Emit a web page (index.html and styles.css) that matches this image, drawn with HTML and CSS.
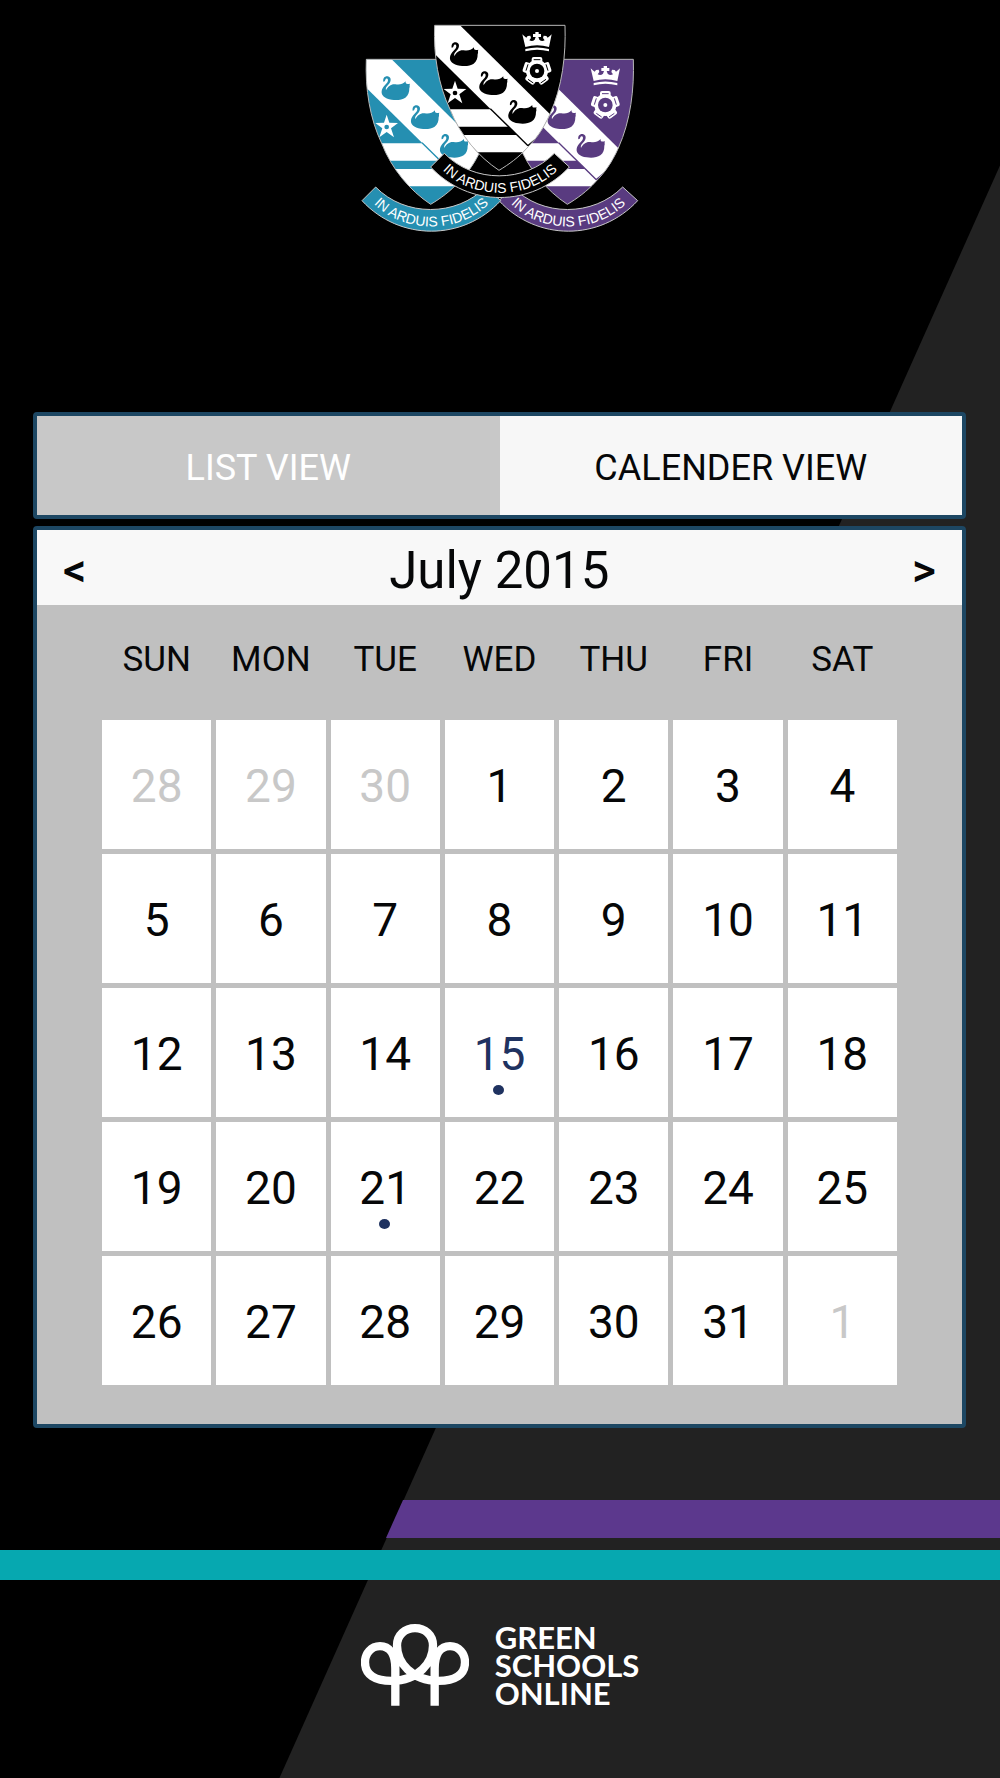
FILE: index.html
```html
<!DOCTYPE html>
<html lang="en">
<head>
<meta charset="utf-8">
<meta name="viewport" content="width=device-width, initial-scale=1">
<title>Calendar - July 2015</title>
<link rel="stylesheet" href="styles.css">
</head>
<body>
<div class="page">
  <header class="masthead">
    <svg class="crest" viewBox="0 0 900 690" role="img" aria-label="School crest">
      <defs>
        <clipPath id="shield-clip"><path d="M254 31H645C648 120 637 215 600 297C580 342 558 372 532 398C505 428 477 448 447 466C385 425 330 360 300 283C265 210 250 120 254 31Z"/></clipPath>
        <path id="swan" d="M305 98C303 88 309 81 318 82C330 84 329 98 321 106C314 113 311 118 313 124C318 112 330 104 341 106C352 108 363 107 372 97C371 104 374 106 385 104C382 109 386 112 383 117C383 130 380 138 371 146C361 153 345 154 330 152C308 149 298 138 300 126C302 112 319 104 319 94C319 88 313 87 311 92C310 95 309 98 305 98Z"/>
        <g id="shield">
          <g clip-path="url(#shield-clip)">
            <path fill="currentColor" d="M240 20H660V480H240Z"/>
            <path fill="#fff" d="M240 20H319L620 317L532 391L240 103Z"/>
            <path fill="#fff" d="M280 283H423L475 335H280ZM300 360H500L532 391L560 412H300Z"/>
            <path stroke="currentColor" stroke-width="4" d="M421 281L534 392"/>
          </g>
          <g fill="currentColor">
            <use href="#swan"/>
            <use href="#swan" x="88" y="87"/>
            <use href="#swan" x="175" y="173"/>
          </g>
          <path fill="#fff" d="M315 197L323 221L349 222L328 238L337 265L315 249L293 265L302 238L281 222L307 221Z"/>
          <circle cx="315" cy="234" r="7" fill="currentColor"/>
          <path fill="#fff" d="M526 96L517 58Q522 64 529 68L533 63L541 62L543 69L538 76Q547 81 554 74L557 66L549 66V57H556V51H566V57H573V66H565L568 74Q575 81 584 76L579 69L581 62L589 63L593 68Q600 64 605 58L597 96Q561 86 526 96ZM526 102Q561 93 597 102V109Q561 100 526 109Z"/>
          <g fill="#fff">
            <circle cx="561" cy="168" r="33"/>
            <rect x="545" y="126" width="32" height="24" rx="6"/>
            <rect x="545" y="126" width="32" height="24" rx="6" transform="rotate(72 561 168)"/>
            <rect x="545" y="126" width="32" height="24" rx="6" transform="rotate(144 561 168)"/>
            <rect x="545" y="126" width="32" height="24" rx="6" transform="rotate(216 561 168)"/>
            <rect x="545" y="126" width="32" height="24" rx="6" transform="rotate(288 561 168)"/>
          </g>
          <path fill="none" stroke="currentColor" stroke-width="3" d="M551 134H571M588 148L594 167M588 193L572 204M550 204L534 193M528 167L534 148"/>
          <circle cx="561" cy="168" r="22" fill="currentColor"/>
          <circle cx="561" cy="168" r="6" fill="#fff"/>
          <path fill="none" stroke="#b9b9b9" stroke-width="3" d="M254 31H645C648 120 637 215 600 297C580 342 558 372 532 398C505 428 477 448 447 466C385 425 330 360 300 283C265 210 250 120 254 31Z"/>
        </g>
        <path id="motto-line" d="M272 460C365 558 535 558 628 460"/>
        <g id="ribbon">
          <path fill="currentColor" stroke="#c8c8c8" stroke-width="3" d="M283 415C370 505 525 505 613 415L658 456C545 578 355 578 242 456Z"/>
          <text class="motto"><textPath href="#motto-line" startOffset="50%" text-anchor="middle">IN ARDUIS FIDELIS</textPath></text>
        </g>
      </defs>
      <g class="house-teal"><use href="#shield" x="-205" y="102"/></g>
      <g class="house-purple"><use href="#shield" x="205" y="102"/></g>
      <g class="house-purple"><use href="#ribbon" x="205" y="101"/></g>
      <g class="house-teal"><use href="#ribbon" x="-206" y="101"/></g>
      <g class="house-black"><use href="#shield"/><use href="#ribbon"/></g>
    </svg>
  </header>

  <main class="content">
    <nav class="tabs" aria-label="View">
      <button class="tab" type="button">LIST VIEW</button>
      <button class="tab tab-active" type="button" aria-pressed="true">CALENDER VIEW</button>
    </nav>

    <section class="calendar" aria-labelledby="month">
      <div class="month-bar">
        <button class="step" type="button" aria-label="Previous month">&lt;</button>
        <h1 class="month" id="month">July 2015</h1>
        <button class="step" type="button" aria-label="Next month">&gt;</button>
      </div>
      <div class="month-body">
        <table class="days">
          <thead>
            <tr><th scope="col">SUN</th><th scope="col">MON</th><th scope="col">TUE</th><th scope="col">WED</th><th scope="col">THU</th><th scope="col">FRI</th><th scope="col">SAT</th></tr>
          </thead>
          <tbody>
            <tr><td class="outside">28</td><td class="outside">29</td><td class="outside">30</td><td>1</td><td>2</td><td>3</td><td>4</td></tr>
            <tr><td>5</td><td>6</td><td>7</td><td>8</td><td>9</td><td>10</td><td>11</td></tr>
            <tr><td>12</td><td>13</td><td>14</td><td class="today event">15</td><td>16</td><td>17</td><td>18</td></tr>
            <tr><td>19</td><td>20</td><td class="event">21</td><td>22</td><td>23</td><td>24</td><td>25</td></tr>
            <tr><td>26</td><td>27</td><td>28</td><td>29</td><td>30</td><td>31</td><td class="outside">1</td></tr>
          </tbody>
        </table>
      </div>
    </section>
  </main>

  <footer class="footer">
    <div class="stripe-purple"></div>
    <div class="stripe-teal"></div>
    <div class="brand">
      <svg class="brand-mark" viewBox="66 72 324 245" aria-hidden="true">
        <path fill="none" stroke="#fff" stroke-width="25" d="M169 317V205C169 160 150 138 123 138C96 138 78 160 78 186C78 224 108 242 158 242C240 242 282 185 282 136C282 104 258 84 228 84C198 84 174 104 174 136C174 185 216 242 298 242C348 242 378 224 378 186C378 160 360 138 333 138C306 138 287 160 287 205V317"/>
      </svg>
      <p class="brand-name">GREEN<br>SCHOOLS<br>ONLINE</p>
    </div>
  </footer>
</div>
</body>
</html>
```

FILE: styles.css
```css
* {
  box-sizing: border-box;
}

body {
  margin: 0;
  background: #000;
  font-family: Roboto, "Liberation Sans", sans-serif;
  color: #060708;
}

button {
  margin: 0;
  padding: 0;
  border: 0;
  background: none;
  color: inherit;
  font: inherit;
  cursor: pointer;
}

.page {
  position: relative;
  z-index: 0;
  display: flex;
  flex-direction: column;
  min-height: 100vh;
}

/* Dark grey diagonal wedge behind the content */
.page::before {
  content: "";
  position: absolute;
  inset: 0;
  z-index: -1;
  background: #222;
  clip-path: polygon(100% 9.3%, 100% 100%, 27.9% 100%);
}

.masthead {
  display: flex;
  justify-content: center;
  padding: 15px 0 167px;
}

.crest {
  width: 300px;
  height: 230px;
}

.house-teal { color: #258fb1; }
.house-purple { color: #593b80; }
.house-black { color: #000; }

.motto {
  fill: #fff;
  font: 42px "Liberation Sans Narrow", "Liberation Sans", sans-serif;
}

.content {
  display: flex;
  flex-direction: column;
  gap: 7px;
  padding: 0 34px 0 33px;
}

.tabs,
.calendar {
  border: 4px solid #1d4763;
  border-radius: 4px;
}

.tabs {
  display: grid;
  grid-template-columns: 1fr 1fr;
  height: 107px;
}

.tab {
  padding-top: 4px;
  background: #c8c8c8;
  color: #fff;
  font-size: 36px;
}

.tab-active {
  background: #f7f7f7;
  color: #060708;
}

.month-bar {
  display: flex;
  align-items: center;
  justify-content: space-between;
  height: 75px;
  padding: 0 26px;
  background: #f8f8f8;
}

.step {
  padding-top: 4px;
  font-size: 46px;
  font-weight: 500;
}

.month {
  margin: 0;
  padding-top: 5px;
  font-size: 51px;
  font-weight: 400;
}

.month-body {
  padding: 0 60px 34px;
  background: #c0c0c0;
}

.days {
  width: 100%;
  table-layout: fixed;
  border-collapse: separate;
  border-spacing: 5px;
}

.days th {
  height: 105px;
  padding: 0 0 7px;
  font-size: 35px;
  font-weight: 400;
}

.days td {
  position: relative;
  height: 129px;
  padding: 2px 0 0;
  background: #fff;
  font-size: 46px;
  text-align: center;
}

.days .outside { color: #c8c8c8; }
.days .today { color: #1f3260; }

.event::after {
  content: "";
  position: absolute;
  bottom: 22px;
  left: calc(50% - 6px);
  width: 11px;
  height: 10px;
  border-radius: 50%;
  background: #1f3260;
}

.footer {
  padding: 72px 0;
}

.stripe-purple {
  height: 38px;
  margin-left: 38.6%;
  background: #5c388d;
  clip-path: polygon(17px 0, 100% 0, 100% 100%, 0 100%);
}

.stripe-teal {
  height: 30px;
  margin-top: 12px;
  background: #06a8b0;
}

.brand {
  display: flex;
  justify-content: center;
  align-items: center;
  gap: 26px;
  margin-top: 43px;
}

.brand-mark {
  width: 108px;
  height: 82px;
}

.brand-name {
  margin: 0;
  color: #fff;
  font: 700 31px/28px Lato, sans-serif;
}
```
